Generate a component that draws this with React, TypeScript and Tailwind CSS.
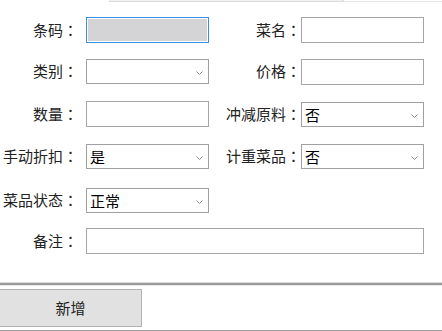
const font = { fontFamily: '"Noto Sans CJK SC", "Microsoft YaHei", sans-serif' };

function TextBox({ className = "" }: { className?: string }) {
  return <div className={"h-[26px] border border-[#a5a5a5] bg-white " + className} />;
}

function Chevron() {
  return (
    <svg width="7" height="4" viewBox="0 0 7 4" className="absolute right-[5px] top-[11px]">
      <polyline points="0.5,0.5 3.5,3.5 6.5,0.5" fill="none" stroke="#8a8a8a" strokeWidth="1" />
    </svg>
  );
}

function ComboBox({ value = "" }: { value?: string }) {
  return (
    <div className="relative h-[25px] w-[123px] border border-[#a0a0a0] bg-white pl-[3px] text-[15px] leading-[23px] text-black">
      {value}
      <Chevron />
    </div>
  );
}

function Colon() {
  return <span style={{ fontFamily: '"Noto Sans CJK TC", sans-serif' }}>：</span>;
}

function LeftLabel({ text }: { text: string }) {
  return (
    <div className="w-[78px] shrink-0 text-right text-[15px] text-[#222]">
      {text}
      <Colon />
    </div>
  );
}

function RightLabel({ text }: { text: string }) {
  return (
    <div className="w-[92px] shrink-0 text-right text-[15px] text-[#222]">
      {text}
      <Colon />
    </div>
  );
}

export default function App() {
  return (
    <div className="relative flex h-[331px] w-[442px] flex-col overflow-hidden bg-white" style={font}>
      <div className="flex h-[2px]">
        <div className="ml-[109px] w-[234px] border-b border-[#dcdcdc] bg-[#f0f0f0]" />
        <div className="flex-1 border-b border-[#e8e8e8] border-l border-l-[#dcdcdc]" />
      </div>

      <div className="mt-[15px] flex h-[26px] items-center">
        <LeftLabel text="条码" />
        <div className="ml-[8px] h-[26px] w-[123px] border border-[#3a8ee6] bg-white p-[1px]">
          <div className="h-full w-full bg-[#d4d4d7]" />
        </div>
        <RightLabel text="菜名" />
        <TextBox className="w-[123px]" />
      </div>

      <div className="mt-[16px] flex h-[25px] items-center">
        <LeftLabel text="类别" />
        <div className="ml-[8px]">
          <ComboBox />
        </div>
        <RightLabel text="价格" />
        <TextBox className="w-[123px]" />
      </div>

      <div className="mt-[17px] flex h-[26px] items-center">
        <LeftLabel text="数量" />
        <TextBox className="ml-[8px] w-[123px]" />
        <RightLabel text="冲减原料" />
        <ComboBox value="否" />
      </div>

      <div className="mt-[17px] flex h-[25px] items-center">
        <LeftLabel text="手动折扣" />
        <div className="ml-[8px]">
          <ComboBox value="是" />
        </div>
        <RightLabel text="计重菜品" />
        <ComboBox value="否" />
      </div>

      <div className="mt-[19px] flex h-[25px] items-center">
        <LeftLabel text="菜品状态" />
        <div className="ml-[8px]">
          <ComboBox value="正常" />
        </div>
      </div>

      <div className="mt-[15px] flex h-[26px] items-center">
        <LeftLabel text="备注" />
        <TextBox className="ml-[8px] w-[338px]" />
      </div>

      <div className="mt-[28px] h-[1px] bg-[#d9d9d9]" />
      <div className="h-[2px] bg-[#9a9a9a]" />
      <div className="h-[1px] bg-[#e8e8e8]" />

      <div className="flex flex-1 items-start pt-[3px]">
        <div className="flex h-[38px] w-[142px] items-center justify-center border border-l-0 border-[#b4b4b4] bg-[#e1e1e1] text-[15px] text-[#222]">
          新增
        </div>
      </div>
      <div className="h-[1px] bg-[#a0a0a0]" />
    </div>
  );
}
